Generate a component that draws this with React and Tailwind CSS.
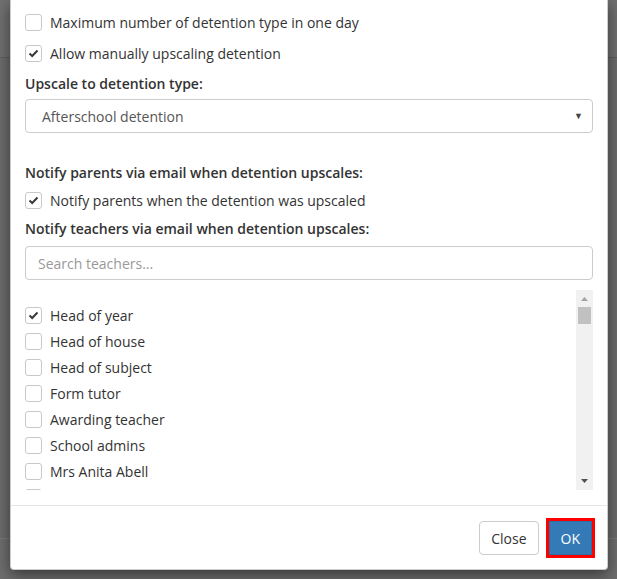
import React from 'react'

const teachers = [
  { name: 'Head of year', checked: true },
  { name: 'Head of house' },
  { name: 'Head of subject' },
  { name: 'Form tutor' },
  { name: 'Awarding teacher' },
  { name: 'School admins' },
  { name: 'Mrs Anita Abell' },
  { name: '' },
]

function Box({ checked }) {
  return (
    <span className="w-[17px] h-[17px] shrink-0 border border-[#c8c8c8] rounded-[3px] bg-white flex items-center justify-center">
      {checked && (
        <svg width="11" height="9" viewBox="0 0 11 9">
          <path d="M1.5 4.5 L4.2 7 L9.5 1.5" fill="none" stroke="#3a3a3a" strokeWidth="2" />
        </svg>
      )}
    </span>
  )
}

function CheckRow({ label, checked, h = 'h-[31px]' }) {
  return (
    <label className={`flex items-center gap-[8px] ${h}`}>
      <Box checked={checked} />
      {label && <span>{label}</span>}
    </label>
  )
}

export default function App() {
  return (
    <div
      className="relative w-[617px] h-[579px] overflow-hidden bg-[#6e6e6e]"
      style={{ fontFamily: '"Open Sans", "Liberation Sans", sans-serif' }}
    >
      {/* page behind the backdrop */}
      <div className="h-[58px] border-b border-[#5e5e5e] bg-[#707070]" />
      <div className="h-[481px] border-b border-[#7a7a7a] bg-[#6c6c6c]" />

      {/* Modal */}
      <div className="absolute left-[10px] top-0 w-[598px] h-[570px] bg-white border-x border-b border-black/20 rounded-b-[4px] shadow-[0_5px_15px_rgba(0,0,0,0.5)] flex flex-col text-[14px] text-[#333]">
        <div className="px-[14px] pt-[7px] pb-[15px]">
          <CheckRow label="Maximum number of detention type in one day" />
          <CheckRow label="Allow manually upscaling detention" checked h="h-[30px]" />

          <div className="h-[30px] flex items-center font-semibold">Upscale to detention type:</div>
          <div className="mt-[1px] h-[34px] border border-[#ccc] rounded-[4px] flex items-center justify-between pl-[16px] pr-[9px] text-[#555]">
            <span>Afterschool detention</span>
            <span className="text-[9px] text-[#444]">▼</span>
          </div>

          <div className="mt-[24px] h-[30px] flex items-center font-semibold">Notify parents via email when detention upscales:</div>
          <CheckRow label="Notify parents when the detention was upscaled" checked h="h-[26px]" />
          <div className="h-[30px] flex items-center font-semibold">Notify teachers via email when detention upscales:</div>
          <div className="mt-[3px] h-[34px] border border-[#ccc] rounded-[4px] flex items-center px-[12px] text-[#999]">
            Search teachers...
          </div>

          <div className="mt-[10px] h-[200px] flex overflow-hidden">
            <div className="flex-1 pt-[12px]">
              {teachers.map((t, i) => (
                <CheckRow key={i} label={t.name} checked={t.checked} h="h-[26px]" />
              ))}
            </div>
            <div className="w-[17px] bg-[#f1f1f1] flex flex-col items-center">
              <svg width="9" height="17" viewBox="0 0 9 17">
                <path d="M1 11 L4.5 7 L8 11 Z" fill="#a3a3a3" />
              </svg>
              <div className="w-[13px] h-[17px] bg-[#c1c1c1]" />
              <div className="flex-1" />
              <svg width="9" height="17" viewBox="0 0 9 17">
                <path d="M1 6 L8 6 L4.5 10 Z" fill="#505050" />
              </svg>
            </div>
          </div>
        </div>

        <div className="border-t border-[#e5e5e5] px-[15px] pt-[15px] pb-[15px] flex justify-end items-center gap-[10px]">
          <button className="h-[34px] px-[11px] border border-[#ccc] rounded-[4px] bg-white text-[#333]">Close</button>
          <button className="h-[34px] px-[11px] border border-[#2e6da4] bg-[#337ab7] text-white outline-[3px] outline-solid outline-[#ff0000]">OK</button>
        </div>
      </div>
    </div>
  )
}
